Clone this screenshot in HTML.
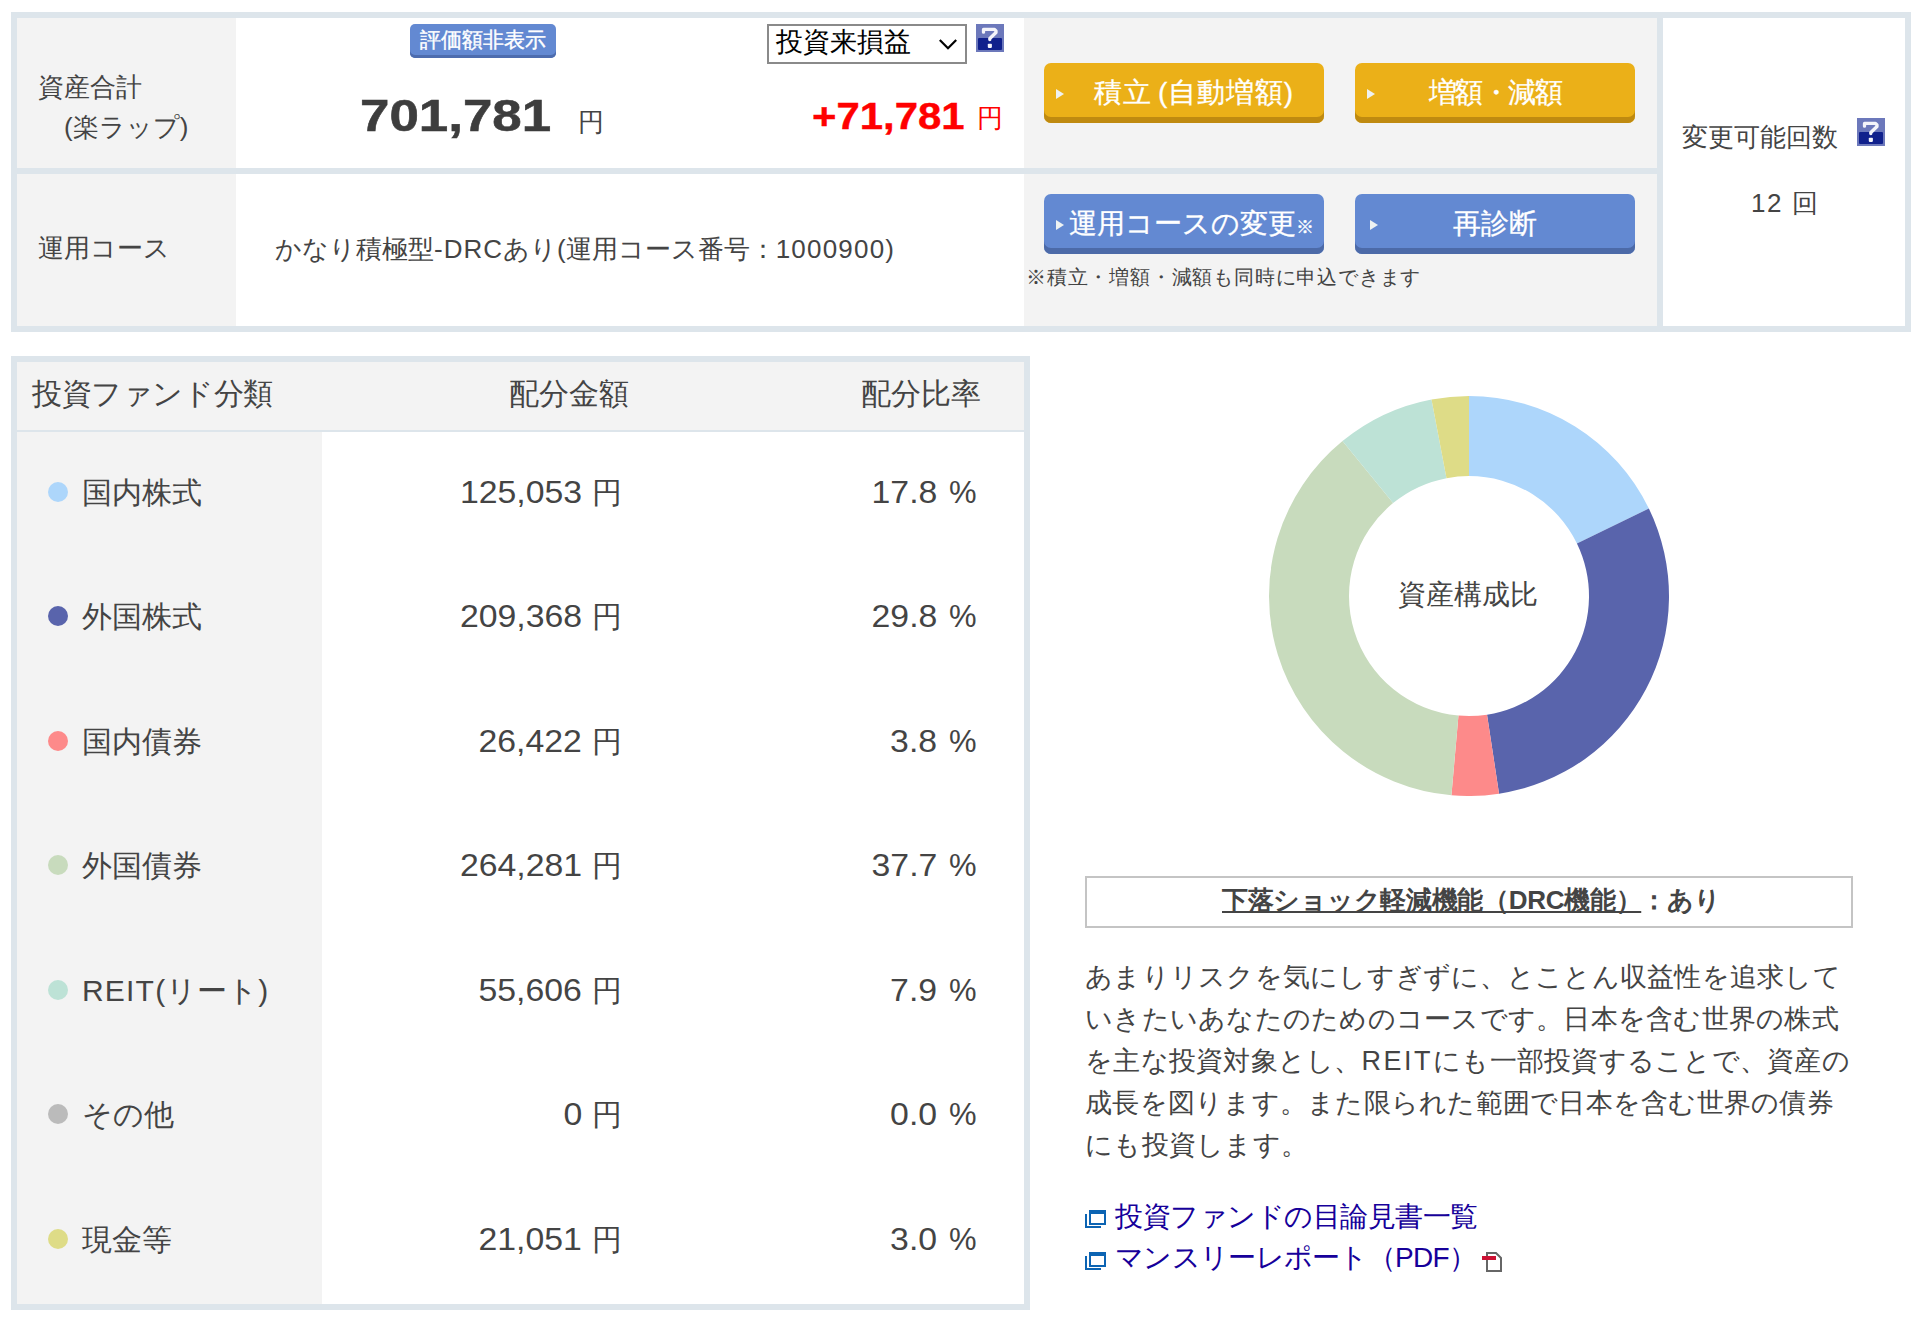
<!DOCTYPE html>
<html lang="ja">
<head>
<meta charset="utf-8">
<style>
*{margin:0;padding:0;box-sizing:border-box}
html,body{width:1920px;height:1318px;background:#fff;overflow:hidden}
body{position:relative;font-family:"Liberation Sans",sans-serif;color:#444}
.a{position:absolute;white-space:nowrap}
.bx{position:absolute}
.btn{position:absolute;width:280px;height:60px;border-radius:7px;color:#fff;font-weight:normal;-webkit-text-stroke:0.3px #fff;font-size:28px;line-height:60px;text-align:center}
.or{background:#ebb018;box-shadow:inset 0 -6px 0 #bf8a10}
.bl{background:#6389d2;box-shadow:inset 0 -6px 0 #4c6aa8}
.tri{position:absolute;left:12px;top:26px;width:0;height:0;border-top:5.5px solid transparent;border-bottom:5.5px solid transparent;border-left:8.5px solid #eef2f2}
.bl .tri{top:26px}
.q{position:absolute;width:28px;height:28px}
.dot{position:absolute;left:48px;width:20px;height:20px;border-radius:50%}
.row{position:absolute;left:17px;width:1007px;height:124px}
.lab{left:82px;font-size:30px;line-height:36px}
.num{font-size:31px;line-height:36px;transform:scaleX(1.09);transform-origin:100% 0}
.yen{left:592px;font-size:30px;line-height:36px}
.pc{left:949px;font-size:31px;line-height:36px}
</style>
</head>
<body>
<!-- TOP PANEL -->
<div class="bx" style="left:11px;top:12px;width:1900px;height:320px;background:#dde5eb"></div>
<div class="bx" style="left:17px;top:18px;width:219px;height:150px;background:#f3f3f3"></div>
<div class="bx" style="left:236px;top:18px;width:788px;height:150px;background:#fff"></div>
<div class="bx" style="left:1024px;top:18px;width:633px;height:150px;background:#f3f3f3"></div>
<div class="bx" style="left:17px;top:174px;width:219px;height:152px;background:#f3f3f3"></div>
<div class="bx" style="left:236px;top:174px;width:788px;height:152px;background:#fff"></div>
<div class="bx" style="left:1024px;top:174px;width:633px;height:152px;background:#f3f3f3"></div>
<div class="bx" style="left:1663px;top:18px;width:242px;height:308px;background:#fff"></div>

<div class="a" style="left:38px;top:67px;font-size:26px;line-height:40px">資産合計<br>&#12288;(楽ラップ)</div>
<div class="a" style="left:38px;top:228px;font-size:26px;line-height:40px">運用コース</div>

<div class="bx" style="left:410px;top:24px;width:146px;height:34px;border-radius:5px;background:#6389d2;box-shadow:inset 0 -3px 0 #4d6cae;color:#fff;-webkit-text-stroke:0.4px #fff;font-size:21px;line-height:32px;text-align:center">評価額非表示</div>

<div class="a" style="left:360px;top:90px;font-size:45px;font-weight:bold;color:#3d3d3d;transform:scaleX(1.175);transform-origin:0 0;-webkit-text-stroke:0.6px #3d3d3d">701,781</div>
<div class="a" style="left:578px;top:105px;font-size:26px">円</div>

<div class="bx" style="left:767px;top:24px;width:200px;height:40px;border:2px solid #8a8a8a;background:#fff"></div>
<div class="a" style="left:776px;top:24px;font-size:26.5px;color:#000">投資来損益</div>
<svg class="bx" style="left:936px;top:36px" width="24" height="16" viewBox="0 0 24 16"><path d="M3.8 4 L12 12.2 L20.2 4" fill="none" stroke="#000" stroke-width="2.2"/></svg>

<svg class="q" style="left:976px;top:24px" viewBox="0 0 28 28"><rect width="28" height="28" fill="#6c78bb"/><rect x="2" y="14" width="24" height="12" rx="1" fill="#10208c"/><polyline points="7.5,8.2 7.5,5.4 18.5,5.4 20,7 20,8.5 13.8,14.5 13.8,15.6" fill="none" stroke="#f4f4fa" stroke-width="3.3" stroke-linejoin="round" stroke-linecap="round"/><rect x="11.8" y="19.8" width="4.1" height="4.1" rx="0.8" fill="#f4f4fa"/></svg>

<div class="a" style="left:812px;top:96px;font-size:36px;font-weight:bold;color:#f00;transform:scaleX(1.163);transform-origin:0 0;-webkit-text-stroke:0.4px #f00">+71,781</div>
<div class="a" style="left:977px;top:101px;font-size:26px;color:#f00">円</div>

<div class="a" style="left:275px;top:232px;font-size:26px">かなり積極型<span style="letter-spacing:1px">-DRC</span>あり(運用コース番号：<span style="letter-spacing:1.2px">1000900)</span></div>

<div class="btn or" style="left:1044px;top:63px"><span class="tri"></span><span style="padding-left:20px;letter-spacing:0.9px">積立<span style="margin-left:6px">(</span>自動増額)</span></div>
<div class="btn or" style="left:1355px;top:63px"><span class="tri"></span><span style="letter-spacing:-1.5px">増額・減額</span></div>
<div class="btn bl" style="left:1044px;top:194px"><span class="tri"></span><span style="padding-left:15px">運用コースの変更<small style="font-size:18px">※</small></span></div>
<div class="btn bl" style="left:1355px;top:194px"><span class="tri" style="left:15px"></span>再診断</div>
<div class="a" style="left:1026px;top:264px;font-size:20px;letter-spacing:0.8px">※積立・増額・減額も同時に申込できます</div>

<div class="a" style="left:1682px;top:120px;font-size:25.8px">変更可能回数</div>
<svg class="q" style="left:1857px;top:118px" viewBox="0 0 28 28"><rect width="28" height="28" fill="#6c78bb"/><rect x="2" y="14" width="24" height="12" rx="1" fill="#10208c"/><polyline points="7.5,8.2 7.5,5.4 18.5,5.4 20,7 20,8.5 13.8,14.5 13.8,15.6" fill="none" stroke="#f4f4fa" stroke-width="3.3" stroke-linejoin="round" stroke-linecap="round"/><rect x="11.8" y="19.8" width="4.1" height="4.1" rx="0.8" fill="#f4f4fa"/></svg>
<div class="a" style="left:1751px;top:186px;font-size:26px"><span style="letter-spacing:1.5px">12 </span>回</div>

<!-- TABLE -->
<div class="bx" style="left:11px;top:356px;width:1019px;height:954px;background:#dde5eb"></div>
<div class="bx" style="left:17px;top:362px;width:1007px;height:68px;background:#f3f3f3"></div>
<div class="bx" style="left:17px;top:432px;width:305px;height:872px;background:#f3f3f3"></div>
<div class="bx" style="left:322px;top:432px;width:702px;height:872px;background:#fff"></div>
<div class="a" style="left:32px;top:374px;font-size:30px;letter-spacing:-0.4px">投資ファンド分類</div>
<div class="a" style="left:509px;top:374px;font-size:30px">配分金額</div>
<div class="a" style="left:861px;top:374px;font-size:30px">配分比率</div>

<div class="dot" style="top:482px;background:#add6fb"></div>
<div class="a lab" style="top:475px">国内株式</div>
<div class="a num" style="right:1338px;top:475px">125,053</div>
<div class="a yen" style="top:475px">円</div>
<div class="a num" style="right:983px;top:475px">17.8</div>
<div class="a pc" style="top:475px">%</div>
<div class="dot" style="top:606px;background:#5964ac"></div>
<div class="a lab" style="top:599px">外国株式</div>
<div class="a num" style="right:1338px;top:599px">209,368</div>
<div class="a yen" style="top:599px">円</div>
<div class="a num" style="right:983px;top:599px">29.8</div>
<div class="a pc" style="top:599px">%</div>
<div class="dot" style="top:731px;background:#fd8a8a"></div>
<div class="a lab" style="top:724px">国内債券</div>
<div class="a num" style="right:1338px;top:724px">26,422</div>
<div class="a yen" style="top:724px">円</div>
<div class="a num" style="right:983px;top:724px">3.8</div>
<div class="a pc" style="top:724px">%</div>
<div class="dot" style="top:855px;background:#c8dbbd"></div>
<div class="a lab" style="top:848px">外国債券</div>
<div class="a num" style="right:1338px;top:848px">264,281</div>
<div class="a yen" style="top:848px">円</div>
<div class="a num" style="right:983px;top:848px">37.7</div>
<div class="a pc" style="top:848px">%</div>
<div class="dot" style="top:980px;background:#bde2d6"></div>
<div class="a lab" style="top:973px"><span style="letter-spacing:1.2px">REIT(</span>リート)</div>
<div class="a num" style="right:1338px;top:973px">55,606</div>
<div class="a yen" style="top:973px">円</div>
<div class="a num" style="right:983px;top:973px">7.9</div>
<div class="a pc" style="top:973px">%</div>
<div class="dot" style="top:1104px;background:#bbbbbb"></div>
<div class="a lab" style="top:1097px">その他</div>
<div class="a num" style="right:1338px;top:1097px">0</div>
<div class="a yen" style="top:1097px">円</div>
<div class="a num" style="right:983px;top:1097px">0.0</div>
<div class="a pc" style="top:1097px">%</div>
<div class="dot" style="top:1229px;background:#dedc87"></div>
<div class="a lab" style="top:1222px">現金等</div>
<div class="a num" style="right:1338px;top:1222px">21,051</div>
<div class="a yen" style="top:1222px">円</div>
<div class="a num" style="right:983px;top:1222px">3.0</div>
<div class="a pc" style="top:1222px">%</div>
<!-- CHART -->
<svg class="bx" style="left:1269px;top:396px" width="400" height="400" viewBox="0 0 400 400"><path d="M200.00 0.00A200 200 0 0 1 379.88 112.58L307.93 147.55A120 120 0 0 0 200.00 80.00Z" fill="#add6fb"/><path d="M379.88 112.58A200 200 0 0 1 230.05 397.73L218.03 318.64A120 120 0 0 0 307.93 147.55Z" fill="#5964ac"/><path d="M230.05 397.73A200 200 0 0 1 182.43 399.23L189.46 319.54A120 120 0 0 0 218.03 318.64Z" fill="#fd8a8a"/><path d="M182.43 399.23A200 200 0 0 1 73.49 45.10L124.09 107.06A120 120 0 0 0 189.46 319.54Z" fill="#c8dbbd"/><path d="M73.49 45.10A200 200 0 0 1 162.52 3.54L177.51 82.13A120 120 0 0 0 124.09 107.06Z" fill="#bde2d6"/><path d="M162.52 3.54A200 200 0 0 1 200.00 0.00L200.00 80.00A120 120 0 0 0 177.51 82.13Z" fill="#dedc87"/></svg>
<div class="a" style="left:1398px;top:576px;font-size:28px">資産構成比</div>
<div class="bx" style="left:1085px;top:876px;width:768px;height:52px;border:2px solid #c4c4c4"></div>
<div class="a" style="left:1222px;top:883px;font-size:26px;letter-spacing:-0.3px;font-weight:bold;color:#444"><span style="text-decoration:underline">下落ショック軽減機能（DRC機能）</span>：あり</div>
<div class="bx" style="left:1085px;top:956px;width:800px;font-size:27px;letter-spacing:0.25px;line-height:42px;color:#444">あまりリスクを気にしすぎずに、とことん収益性を追求して<br>いきたいあなたのためのコースです。日本を含む世界の株式<br>を主な投資対象とし、<span style="letter-spacing:2.5px">REIT</span>にも一部投資することで、資産の<br>成長を図ります。また限られた範囲で日本を含む世界の債券<br>にも投資します。</div>
<svg class="bx" style="left:1084px;top:1209px" width="22" height="20" viewBox="0 0 22 20"><path d="M2 5 V18 H17" fill="none" stroke="#0c64b3" stroke-width="2"/><rect x="6" y="2" width="15" height="13" fill="none" stroke="#0c64b3" stroke-width="2"/><rect x="6" y="1" width="15" height="4" fill="#0c64b3"/></svg>
<div class="a" style="left:1115px;top:1198px;font-size:28px;letter-spacing:-0.5px;color:#16009a">投資ファンドの目論見書一覧</div>
<svg class="bx" style="left:1084px;top:1251px" width="22" height="20" viewBox="0 0 22 20"><path d="M2 5 V18 H17" fill="none" stroke="#0c64b3" stroke-width="2"/><rect x="6" y="2" width="15" height="13" fill="none" stroke="#0c64b3" stroke-width="2"/><rect x="6" y="1" width="15" height="4" fill="#0c64b3"/></svg>
<div class="a" style="left:1115px;top:1239px;font-size:28px;letter-spacing:-0.7px;color:#16009a">マンスリーレポート（PDF）</div>
<svg class="bx" style="left:1480px;top:1250px" width="24" height="22" viewBox="0 0 24 22"><path d="M7 3 H16 L21 8 V21 H7 Z" fill="#fff" stroke="#666" stroke-width="2"/><rect x="2" y="6" width="14" height="4" fill="#cc1133"/></svg>
</body>
</html>
